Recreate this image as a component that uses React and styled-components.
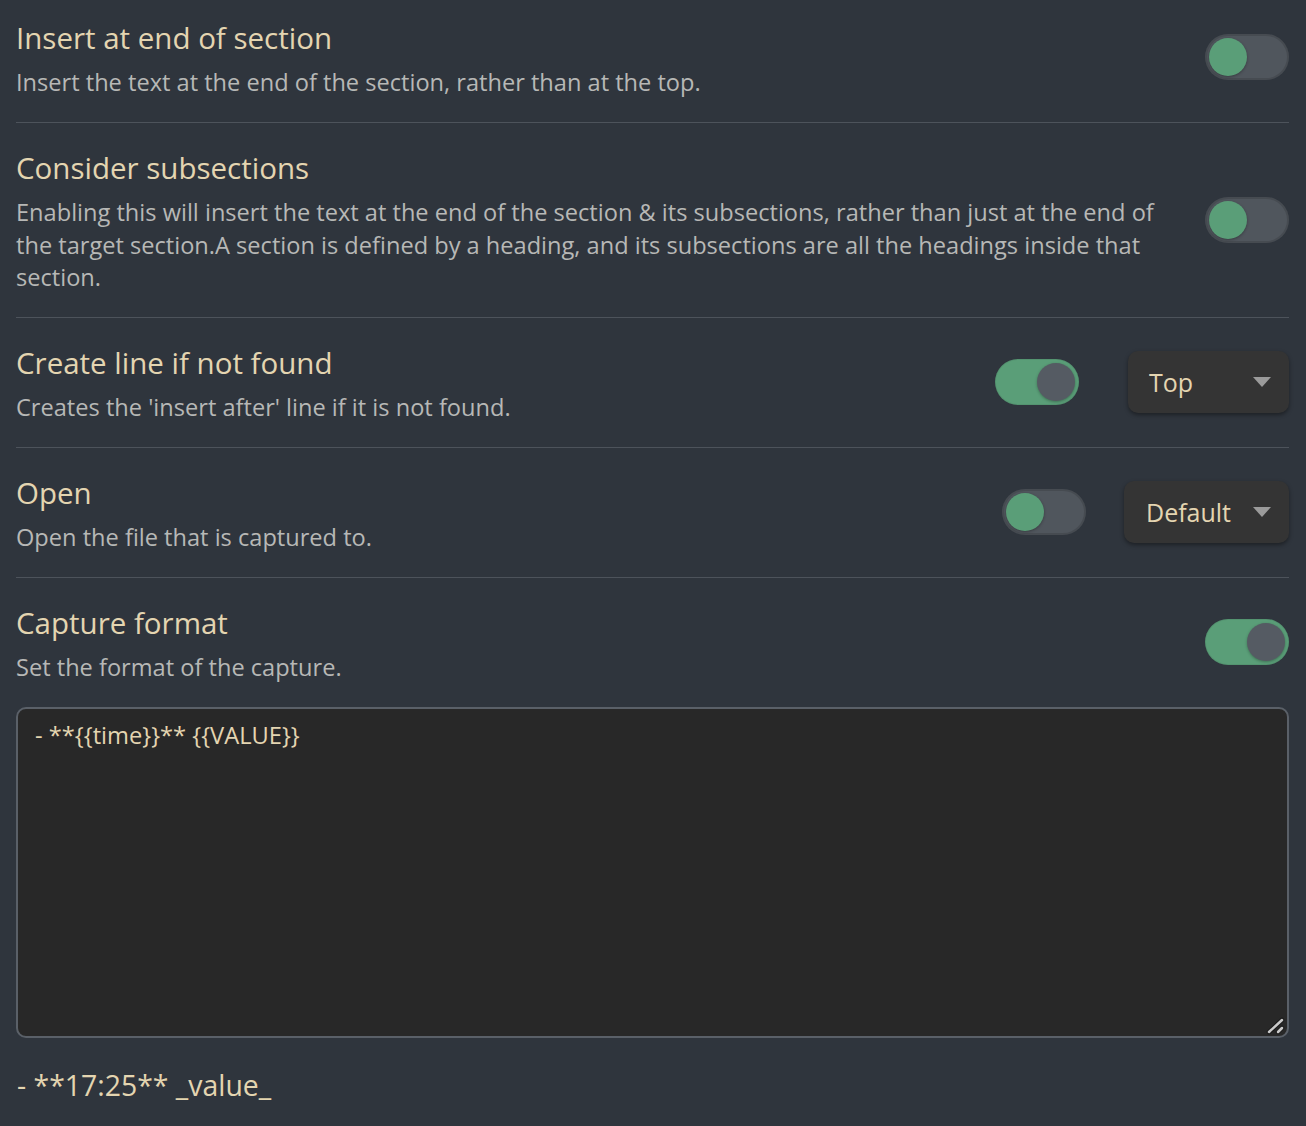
import React from "react";
import styled, { createGlobalStyle } from "styled-components";

const GlobalStyle = createGlobalStyle`
  html, body {
    margin: 0;
    padding: 0;
    background: #2f353d;
  }
  body {
    font-family: "Open Sans", "Noto Sans", sans-serif;
    -webkit-font-smoothing: antialiased;
  }
  * { box-sizing: border-box; }
`;

const Page = styled.div`
  padding: 0 17px 24px 16px;
`;

const Item = styled.div`
  display: flex;
  align-items: center;
  padding: ${(p) => (p.$first ? "20px" : "27px")} 0 23.5px;
  border-top: ${(p) => (p.$first ? "none" : "1px solid #4d535b")};
`;

const Info = styled.div`
  flex: 1;
  min-width: 0;
  padding-right: 30px;
`;

const Name = styled.div`
  font-size: 29.5px;
  line-height: 36px;
  color: #e4d5b1;
`;

const Desc = styled.div`
  margin-top: 10px;
  font-size: 23.6px;
  line-height: 32.5px;
  color: #b7b8b6;
`;

const Controls = styled.div`
  display: flex;
  align-items: center;
  gap: ${(p) => p.$gap || 0}px;
  margin-bottom: 4px;
  flex-shrink: 0;
`;

const Track = styled.div`
  width: 84px;
  height: 46px;
  border-radius: 23px;
  padding: 0 4px;
  display: flex;
  align-items: center;
  justify-content: ${(p) => (p.$on ? "flex-end" : "flex-start")};
  background: ${(p) => (p.$on ? "#5a9e78" : "#50565d")};
  box-shadow: ${(p) =>
    p.$on ? "inset 0 0 0 1px rgba(0,0,0,0.06)" : "inset 0 0 0 2px rgba(0,0,0,0.12)"};
`;

const Knob = styled.div`
  width: 38px;
  height: 38px;
  border-radius: 50%;
  background: ${(p) => (p.$on ? "#555b63" : "#5a9e78")};
  box-shadow: 0 1px 3px rgba(0, 0, 0, 0.3);
`;

const Dropdown = styled.div`
  width: ${(p) => p.$width}px;
  height: 62px;
  border-radius: 10px;
  background: #343434;
  box-shadow: 0 2px 4px rgba(0, 0, 0, 0.4);
  display: flex;
  align-items: center;
  justify-content: space-between;
  padding: 0 18px 0 ${(p) => p.$padLeft}px;
  font-size: 25px;
  color: #e4d5b1;
`;

const Arrow = styled.svg`
  width: 18px;
  height: 10px;
  display: block;
`;

const EditorWrap = styled.div`
  position: relative;
`;

const FormatBox = styled.textarea`
  display: block;
  width: 100%;
  height: 331px;
  margin: 0;
  padding: 11px 17px;
  background: #282828;
  border: 2px solid #5a6068;
  border-radius: 10px;
  color: #e4d5b1;
  font-family: "Open Sans", "Noto Sans", sans-serif;
  font-size: 23.7px;
  line-height: 31px;
  resize: none;
  outline: none;
`;

const Grip = styled.svg`
  position: absolute;
  right: 3px;
  bottom: 3px;
  width: 20px;
  height: 18px;
  pointer-events: none;
`;

const Preview = styled.div`
  margin-top: 28px;
  padding-left: 1px;
  font-size: 28.4px;
  line-height: 38px;
  color: #e4d5b1;
`;

function Toggle({ on }) {
  return (
    <Track $on={on}>
      <Knob $on={on} />
    </Track>
  );
}

function Select({ value, width, padLeft }) {
  return (
    <Dropdown $width={width} $padLeft={padLeft}>
      <span>{value}</span>
      <Arrow viewBox="0 0 18 10">
        <polygon points="0,0 18,0 9,10" fill="#9b9b9b" />
      </Arrow>
    </Dropdown>
  );
}

export default function App() {
  return (
    <>
      <GlobalStyle />
      <Page>
        <Item $first>
          <Info>
            <Name>Insert at end of section</Name>
            <Desc>Insert the text at the end of the section, rather than at the top.</Desc>
          </Info>
          <Controls>
            <Toggle on={false} />
          </Controls>
        </Item>
        <Item>
          <Info>
            <Name>Consider subsections</Name>
            <Desc>
              Enabling this will insert the text at the end of the section &amp; its subsections, rather than just at the end of
              <br />
              the target section.A section is defined by a heading, and its subsections are all the headings inside that
              <br />
              section.
            </Desc>
          </Info>
          <Controls>
            <Toggle on={false} />
          </Controls>
        </Item>
        <Item>
          <Info>
            <Name>Create line if not found</Name>
            <Desc>Creates the 'insert after' line if it is not found.</Desc>
          </Info>
          <Controls $gap={49}>
            <Toggle on={true} />
            <Select value="Top" width={161} padLeft={21} />
          </Controls>
        </Item>
        <Item>
          <Info>
            <Name>Open</Name>
            <Desc>Open the file that is captured to.</Desc>
          </Info>
          <Controls $gap={38}>
            <Toggle on={false} />
            <Select value="Default" width={165} padLeft={22} />
          </Controls>
        </Item>
        <Item>
          <Info>
            <Name>Capture format</Name>
            <Desc>Set the format of the capture.</Desc>
          </Info>
          <Controls>
            <Toggle on={true} />
          </Controls>
        </Item>
        <EditorWrap>
          <FormatBox defaultValue="- **{{time}}** {{VALUE}}" spellCheck={false} />
          <Grip viewBox="0 0 20 18">
            <g stroke="#1a1a1a" strokeWidth="4.5" strokeLinecap="round">
              <line x1="3" y1="15" x2="16" y2="3" />
              <line x1="12" y1="15" x2="16" y2="11" />
            </g>
            <g stroke="#c9c9c9" strokeWidth="2.5" strokeLinecap="round">
              <line x1="3" y1="15" x2="16" y2="3" />
              <line x1="12" y1="15" x2="16" y2="11" />
            </g>
          </Grip>
        </EditorWrap>
        <Preview>- **17:25** _value_</Preview>
      </Page>
    </>
  );
}
